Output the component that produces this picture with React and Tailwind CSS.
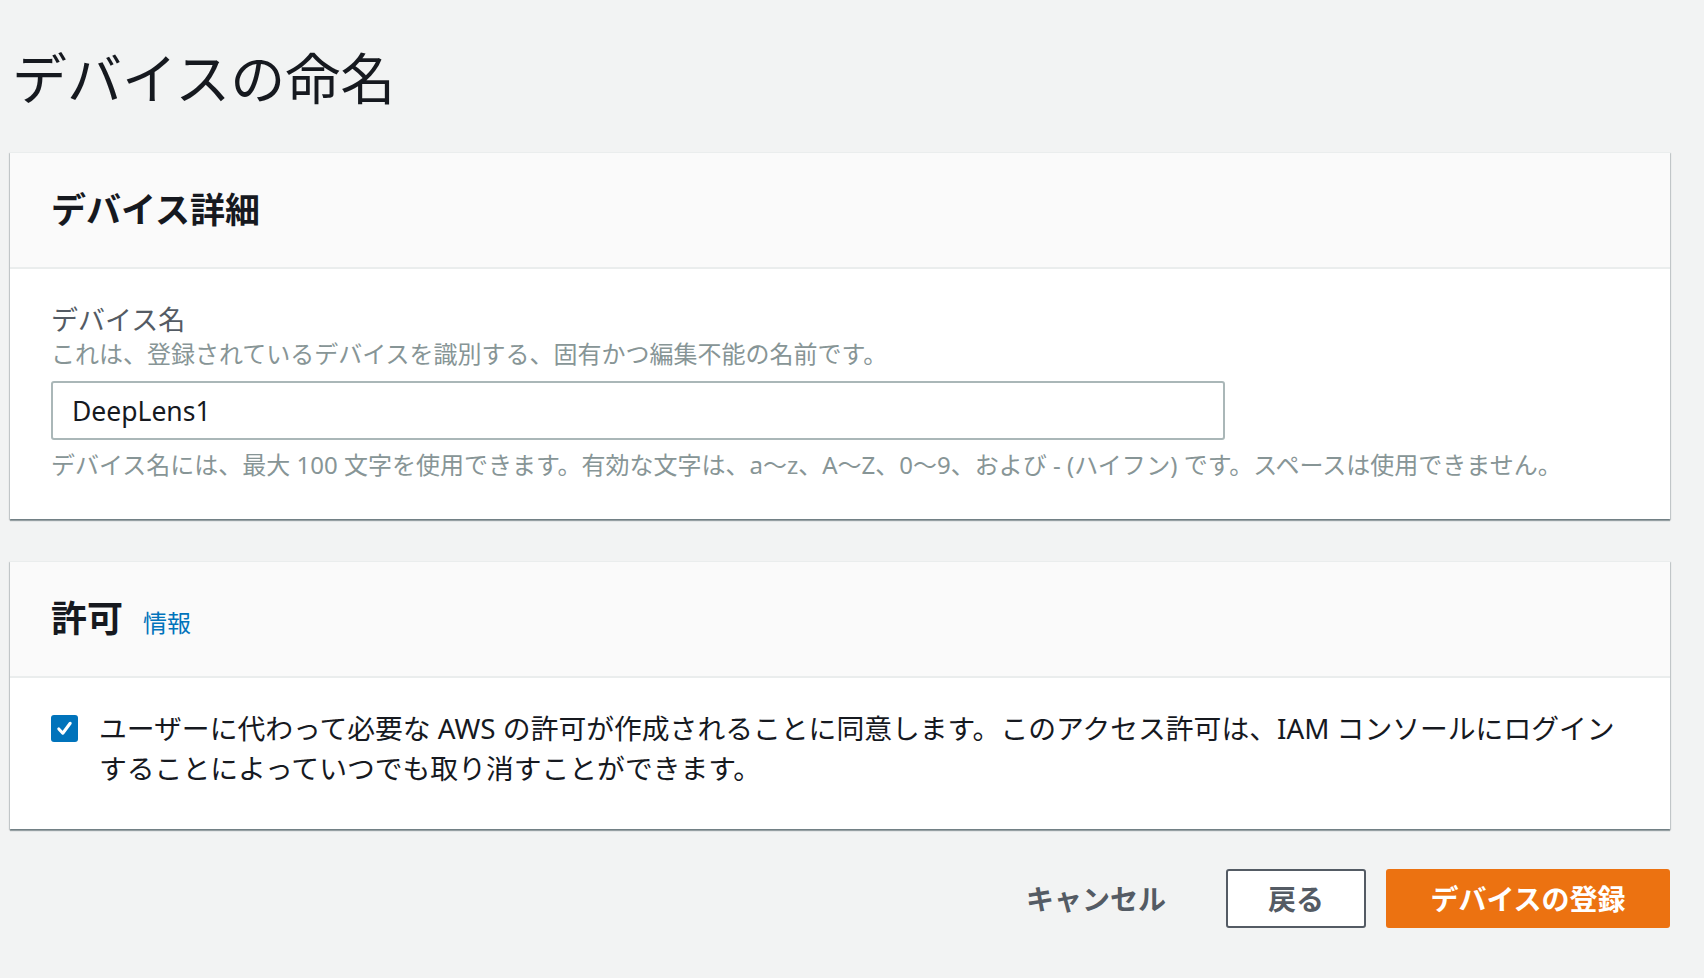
import React from "react";

const font = "font-['Noto_Sans','Noto_Sans_CJK_JP',sans-serif]";

function Card({ header, children, bodyClass }) {
  return (
    <div className="bg-white border-t border-[#eaeded] shadow-[0_2px_1px_0_rgba(0,28,36,0.35),1px_1px_1px_0_rgba(0,28,36,0.15),-1px_1px_1px_0_rgba(0,28,36,0.15)]">
      <div className="h-[116px] bg-[#fafafa] border-b-2 border-[#eaeded] flex items-center px-[41px]">
        {header}
      </div>
      <div className={bodyClass}>{children}</div>
    </div>
  );
}

export default function App() {
  return (
    <div className={`${font} min-h-[978px] bg-[#f2f3f3] pl-[10px] pr-[34px] pt-[44px]`}>
      <h1 className="text-[55px] leading-[68px] text-[#16191f] font-normal pl-[2px]">
        デバイスの命名
      </h1>

      <div className="mt-[40px] flex flex-col gap-[42px]">
        <Card
          header={<h2 className="text-[35px] font-bold text-[#16191f]">デバイス詳細</h2>}
          bodyClass="px-[41px] pt-[33px] pb-[38px]"
        >
          <div className="text-[27px] leading-[35px] text-[#545b64]">デバイス名</div>
          <div className="text-[24px] leading-[33px] text-[#879596]">
            これは、登録されているデバイスを識別する、固有かつ編集不能の名前です。
          </div>
          <div className="mt-[11px] w-[1174px] h-[59px] border-2 border-[#aab7b8] rounded-[3px] flex items-center px-[19px] pt-[3px]">
            <span className="text-[26.5px] text-[#16191f]">DeepLens1</span>
          </div>
          <div className="mt-[9px] text-[24px] leading-[32px] text-[#879596] whitespace-nowrap">
            デバイス名には、最大 100 文字を使用できます。有効な文字は、a～z、A～Z、0～9、および - (ハイフン) です。スペースは使用できません。
          </div>
        </Card>

        <Card
          header={
            <div className="flex items-baseline gap-[20px]">
              <h2 className="text-[36px] font-bold text-[#16191f]">許可</h2>
              <a className="text-[24px] text-[#0073bb]">情報</a>
            </div>
          }
          bodyClass="px-[41px] pt-[30px] pb-[41px]"
        >
          <div className="flex items-start gap-[21px]">
            <div className="mt-[7px] w-[27px] h-[27px] shrink-0 rounded-[3px] bg-[#0073bb] flex items-center justify-center">
              <svg width="19" height="19" viewBox="0 0 20 20" fill="none">
                <path d="M4 10.5 L8.2 15 L16 4.5" stroke="white" strokeWidth="3.2" strokeLinecap="round" strokeLinejoin="round" />
              </svg>
            </div>
            <p className="text-[27.8px] leading-[40px] text-[#16191f] whitespace-nowrap">
              ユーザーに代わって必要な AWS の許可が作成されることに同意します。このアクセス許可は、IAM コンソールにログイン
              <br />
              することによっていつでも取り消すことができます。
            </p>
          </div>
        </Card>
      </div>

      <div className="mt-[40px] flex justify-end items-center gap-[20px]">
        <button className="h-[59px] px-[40px] text-[28px] font-bold text-[#545b64]">キャンセル</button>
        <button className="h-[59px] w-[140px] border-2 border-[#545b64] rounded-[3px] bg-white text-[28px] font-bold text-[#545b64]">
          戻る
        </button>
        <button className="h-[59px] w-[284px] rounded-[3px] bg-[#ec7211] text-[28px] font-bold text-white">
          デバイスの登録
        </button>
      </div>
    </div>
  );
}
